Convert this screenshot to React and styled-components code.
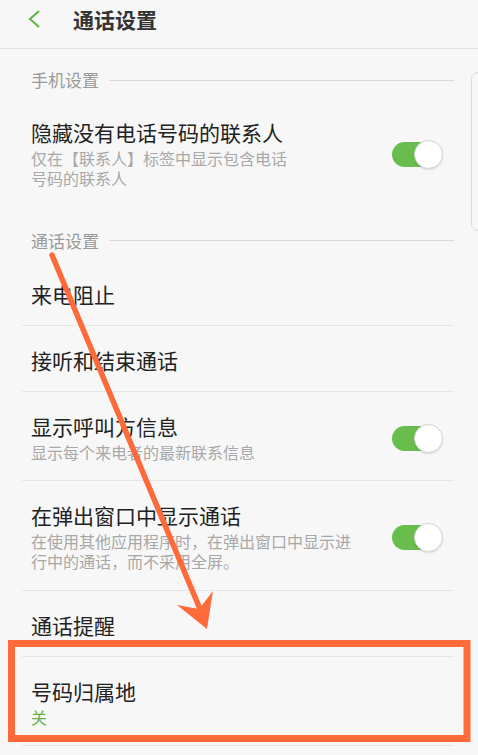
import React from "react";
import styled, { createGlobalStyle } from "styled-components";

const GlobalStyle = createGlobalStyle`
  html, body {
    margin: 0;
    padding: 0;
    background: #f7f7f7;
  }
  body {
    font-family: "Noto Sans CJK SC", "Noto Sans", sans-serif;
  }
`

const Screen = styled.div`
  position: relative;
  width: 478px;
  height: 755px;
  overflow: hidden;
  background: #f7f7f7;
`

const Header = styled.div`
  display: flex;
  align-items: flex-start;
  height: 49px;
  padding: 8px 0 0 27px;
  box-sizing: border-box;
  border-bottom: 1px solid #e2e2e2;
`

const BackButton = styled.div`
  width: 16px;
  height: 22px;
  margin-right: 30px;
  display: flex;
  align-items: center;
`

const Title = styled.div`
  font-size: 21px;
  line-height: 22px;
  font-weight: 700;
  color: #333;
`

const List = styled.div`
  margin: 0 24px 0 22px;
`

const Section = styled.div`
  display: flex;
  align-items: center;
  gap: 10px;
  padding: ${(p) => (p.first ? "22px 0 9px 9px" : "25px 0 10px 9px")};
  font-size: 17px;
  line-height: 18px;
  color: #9a9a9a;

  &::after {
    content: "";
    flex: 1;
    height: 1px;
    background: #d9d9d9;
  }
`

const Row = styled.div`
  display: flex;
  align-items: center;
  padding: 23px 11px ${(p) => (p.sub ? "18.5px" : "20px")} 9px;
  border-top: ${(p) => (p.divider ? "1px solid #e6e6e6" : "none")};
  border-bottom: ${(p) => (p.last ? "1px solid #e6e6e6" : "none")};
`

const Texts = styled.div`
  flex: 1;
`

const ItemTitle = styled.div`
  font-size: 21px;
  line-height: 22px;
  color: #222;
`

const ItemSub = styled.div`
  margin-top: 5px;
  font-size: 16px;
  line-height: 20px;
  color: ${(p) => (p.green ? "#69b24a" : "#a8a8a8")};
`

const Toggle = styled.div`
  position: relative;
  width: 51px;
  height: 29px;
  flex-shrink: 0;

  &::before {
    content: "";
    position: absolute;
    left: 0;
    top: 2px;
    width: 48px;
    height: 25px;
    border-radius: 13px;
    background: #68bd4c;
  }

  &::after {
    content: "";
    position: absolute;
    right: 0;
    top: 0;
    width: 27px;
    height: 27px;
    border-radius: 50%;
    background: #fff;
    border: 1px solid #d4d4d4;
    box-shadow: 0 1px 2px rgba(0, 0, 0, 0.12);
  }
`

const ScrollHandle = styled.div`
  position: absolute;
  left: 471px;
  top: 72px;
  width: 14px;
  height: 159px;
  border: 1.5px solid #dcdcdc;
  border-radius: 8px;
  box-sizing: border-box;
`

const Annotation = styled.svg`
  position: absolute;
  left: 0;
  top: 0;
  pointer-events: none;
`

const ORANGE = "#ff6a3b";

const items = [
  { title: "来电阻止" },
  { title: "接听和结束通话", divider: true },
  { title: "显示呼叫方信息", sub: ["显示每个来电者的最新联系信息"], toggle: true, divider: true },
  {
    title: "在弹出窗口中显示通话",
    sub: ["在使用其他应用程序时，在弹出窗口中显示进", "行中的通话，而不采用全屏。"],
    toggle: true,
    divider: true,
  },
  { title: "通话提醒", divider: true },
  { title: "号码归属地", sub: ["关"], green: true, divider: true, last: true },
];

function Item({ title, sub, toggle, divider, last, green }) {
  return (
    <Row divider={divider} last={last} sub={!!sub}>
      <Texts>
        <ItemTitle>{title}</ItemTitle>
        {sub && (
          <ItemSub green={green}>
            {sub.map((line, i) => (
              <div key={i}>{line}</div>
            ))}
          </ItemSub>
        )}
      </Texts>
      {toggle && <Toggle />}
    </Row>
  );
}

export default function App() {
  return (
    <>
      <GlobalStyle />
      <Screen>
        <Header>
          <BackButton>
            <svg width="14" height="20" viewBox="0 0 14 20">
              <path d="M12 2 L3 10 L12 18" fill="none" stroke="#5fb44a" strokeWidth="2" />
            </svg>
          </BackButton>
          <Title>通话设置</Title>
        </Header>

        <List>
          <Section first>手机设置</Section>
          <Item
            title="隐藏没有电话号码的联系人"
            sub={["仅在【联系人】标签中显示包含电话", "号码的联系人"]}
            toggle
          />
          <Section>通话设置</Section>
          {items.map((it) => (
            <Item key={it.title} {...it} />
          ))}
        </List>

        <ScrollHandle />

        <Annotation width="478" height="755" viewBox="0 0 478 755">
          <line x1="52" y1="255" x2="200" y2="609" stroke={ORANGE} strokeWidth="5.5" strokeLinecap="round" />
          <polygon points="207,629 177,605 199,609 213,591" fill={ORANGE} />
          <rect x="11.5" y="643.5" width="455.5" height="95" fill="none" stroke={ORANGE} strokeWidth="7" />
        </Annotation>
      </Screen>
    </>
  );
}
